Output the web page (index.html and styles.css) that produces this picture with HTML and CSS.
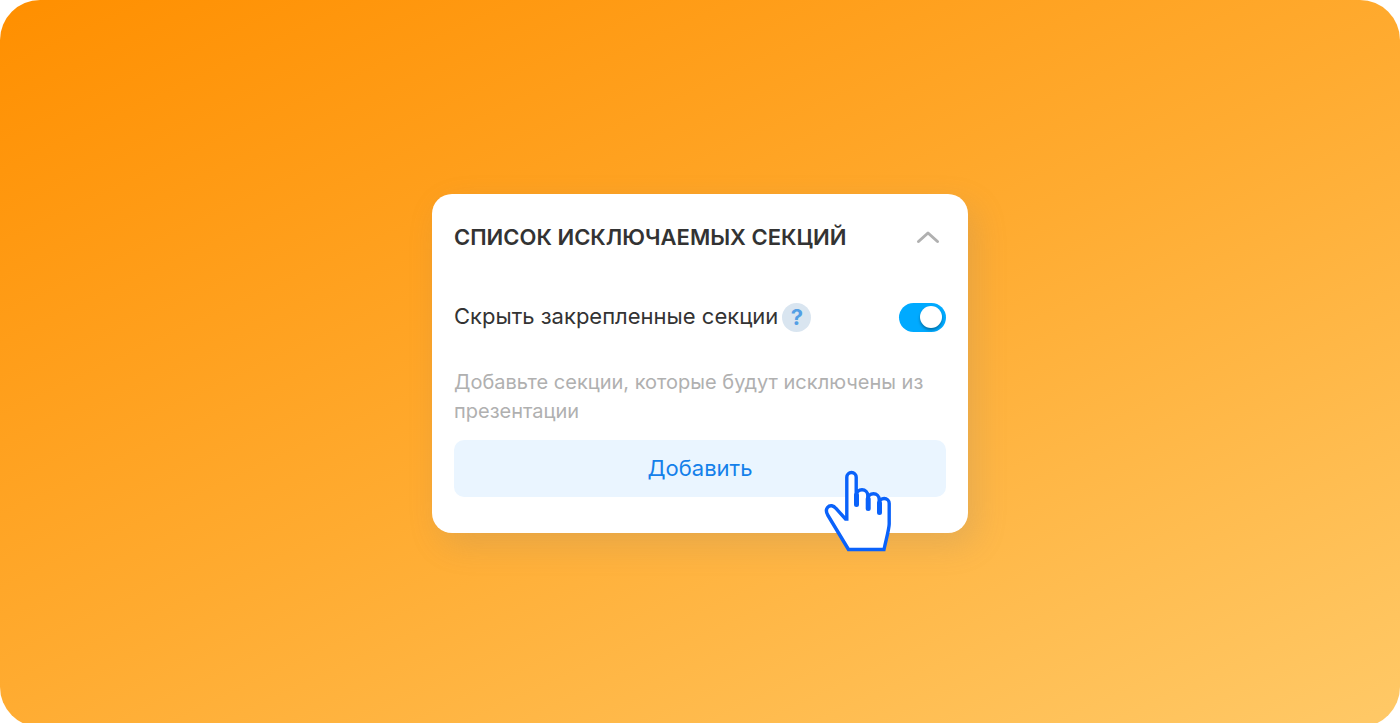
FILE: index.html
```html
<!DOCTYPE html>
<html lang="ru">
<head>
    <meta charset="UTF-8">
    <meta name="viewport" content="width=device-width, initial-scale=1.0">
    <title>Список исключаемых секций</title>
    <link rel="stylesheet" href="styles.css">
</head>
<body>
    <main class="scene">
        <section class="card">
            <div class="card-header">
                <h2>СПИСОК ИСКЛЮЧАЕМЫХ СЕКЦИЙ</h2>
                <button type="button" class="collapse-btn" aria-label="Свернуть">
                    <svg width="24" height="14" viewBox="0 0 24 14" fill="none" stroke="#b0b0b0" stroke-width="3" stroke-linecap="round" stroke-linejoin="round">
                        <path d="M2.5 11.5 12 3l9.5 8.5"/>
                    </svg>
                </button>
            </div>

            <div class="option">
                <label for="hidePinned">Скрыть закрепленные секции</label>
                <button type="button" class="help-btn">?</button>
                <input type="checkbox" id="hidePinned" class="toggle" checked>
            </div>

            <p class="hint">Добавьте секции, которые будут исключены из презентации</p>

            <div class="add-wrap">
                <button type="button" class="add-btn">Добавить</button>
                <!-- Hand pointer over the button -->
                <svg class="pointer" width="68" height="82" viewBox="0 0 68 82" fill="#fff" stroke="#0a62fa" stroke-width="3.4" stroke-linecap="round">
                    <path d="M24.5 79.5 4 45.5C2.5 43 1.5 40 3.5 37.5C6 34.5 9.5 35.5 12 38.5L21.5 49H22.8V7.2a4.7 4.7 0 0 1 9.4 0V25.5a5.8 5.8 0 0 1 11.6 0V29.5a5.7 5.7 0 0 1 11.4 0V33.5a5 5 0 0 1 10 0V54C65.2 58 63 66 60 79.5Z"/>
                    <path stroke-width="5" d="M32.5 25v9.5M44.2 29v9.5M55.5 33v9.5"/>
                </svg>
            </div>
        </section>
    </main>
</body>
</html>
```

FILE: styles.css
```css
* {
    box-sizing: border-box;
}

body {
    margin: 0;
    height: 100vh;
    overflow: hidden;
    background-color: #fff;
    font-family: Inter, "Noto Sans", sans-serif;
    color: #333;
}

.scene {
    display: flex;
    justify-content: center;
    align-items: center;
    min-height: calc(100vh + 4px);
    padding: 20px;
    border-radius: 40px;
    background: linear-gradient(155deg, #ff8f00, #ffab30 50%, #ffc967);
}

.card {
    width: 100%;
    max-width: 536px;
    padding: 22px 22px 36px;
    border-radius: 20px;
    background-color: #fff;
    box-shadow: 8px 12px 32px rgba(130, 130, 130, 0.2);
}

.card-header {
    display: flex;
    justify-content: space-between;
    align-items: center;
    height: 42px;
    margin-bottom: 44px;
}

.card-header h2 {
    margin: 0;
    font-size: 22px;
    font-weight: 600;
    line-height: 30px;
}

button {
    border: none;
    font-family: inherit;
    cursor: pointer;
}

.collapse-btn {
    display: flex;
    padding: 6px;
    background: none;
}

.option {
    display: flex;
    align-items: center;
    height: 30px;
    margin-bottom: 36px;
}

.option label {
    padding-bottom: 2px;
    font-size: 22px;
    line-height: 28px;
}

.help-btn {
    width: 29px;
    height: 29px;
    margin-left: 4px;
    padding: 0;
    border-radius: 50%;
    background-color: #d9e5f0;
    color: #539fe5;
    font-size: 22px;
    font-weight: 700;
    line-height: 29px;
}

.toggle {
    appearance: none;
    display: flex;
    align-items: center;
    width: 47px;
    height: 29px;
    margin: 0 0 0 auto;
    padding: 0 4px;
    border-radius: 15px;
    background-color: #c4cdd5;
    cursor: pointer;
}

.toggle::before {
    content: "";
    width: 22px;
    height: 22px;
    border-radius: 50%;
    background-color: #fff;
    box-shadow: 0 2px 3px rgba(0, 0, 0, 0.35);
}

.toggle:checked {
    justify-content: flex-end;
    background-color: #00aaff;
}

.hint {
    margin: 0 0 14px;
    color: #b0b0b0;
    font-size: 20px;
    line-height: 29px;
}

.add-wrap {
    position: relative;
}

.add-btn {
    display: block;
    width: 100%;
    height: 57px;
    padding: 0 0 2px;
    border-radius: 10px;
    background-color: #eaf5ff;
    color: #1480ea;
    font-size: 22px;
}

.pointer {
    position: absolute;
    top: 30px;
    right: 54px;
    pointer-events: none;
}
```
